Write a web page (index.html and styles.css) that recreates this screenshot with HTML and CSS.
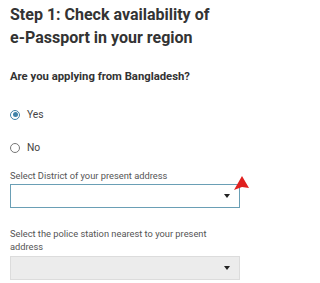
FILE: index.html
```html
<!DOCTYPE html>
<html>
<head>
<meta charset="utf-8">
<link rel="stylesheet" href="styles.css">
</head>
<body>
<div class="page">
  <h1 class="title">Step 1: Check availability of <span class="nowrap">e-Passport</span> in your region</h1>
  <p class="question">Are you applying from Bangladesh?</p>
  <div class="radios">
    <label class="radio"><span class="dot checked"></span><span>Yes</span></label>
    <label class="radio"><span class="dot"></span><span>No</span></label>
  </div>
  <div class="field">
    <div class="label">Select District of your present address</div>
    <div class="select active"><span class="caret"></span></div>
    <svg class="pointer" width="18" height="18" viewBox="0 0 18 18"><polygon points="10,2 2,16 10,13 17,14" fill="#e0201f"/></svg>
  </div>
  <div class="field second">
    <div class="label">Select the police station nearest to your present address</div>
    <div class="select disabled"><span class="caret"></span></div>
  </div>
</div>
</body>
</html>
```
FILE: styles.css
```css
html, body { margin: 0; padding: 0; background: #fff; }
body { font-family: Roboto, "Liberation Sans", sans-serif; color: #333; width: 250px; overflow: hidden; }
.page { padding: 0 10px; width: 230px; }
.nowrap { white-space: nowrap; }
.title { font-size: 16px; line-height: 23px; font-weight: 700; margin: 3px 0 0; color: #333; }
.question { font-size: 11.3px; line-height: 15px; font-weight: 700; margin: 20px 0 0; color: #333; }
.radios { display: flex; flex-direction: column; gap: 20px; margin-top: 24px; }
.radio { display: flex; align-items: center; gap: 7px; font-size: 10.3px; line-height: 13px; color: #444; }
.dot { width: 10px; height: 10px; border: 1px solid #777; border-radius: 50%; box-sizing: border-box; display: flex; align-items: center; justify-content: center; }
.dot.checked { border-color: #3f82a8; }
.dot.checked::after { content: ""; width: 5px; height: 5px; border-radius: 50%; background: #3f82a8; }
.field { position: relative; margin-top: 16px; }
.label { font-size: 9.3px; line-height: 12px; color: #555; }
.select { margin-top: 2px; height: 24px; box-sizing: border-box; display: flex; align-items: center; justify-content: flex-end; padding-right: 9px; }
.select.active { border: 1px solid #6a9fb5; background: #fff; }
.select.disabled { border: 1px solid #dcdcdc; background: #ececec; }
.caret { width: 0; height: 0; border-left: 3px solid transparent; border-right: 3px solid transparent; border-top: 4px solid #222; }
.pointer { position: absolute; right: -10px; top: 4px; }
.second { margin-top: 19px; }
.second .label { line-height: 13px; }
.second .select { margin-top: 3px; }
```
